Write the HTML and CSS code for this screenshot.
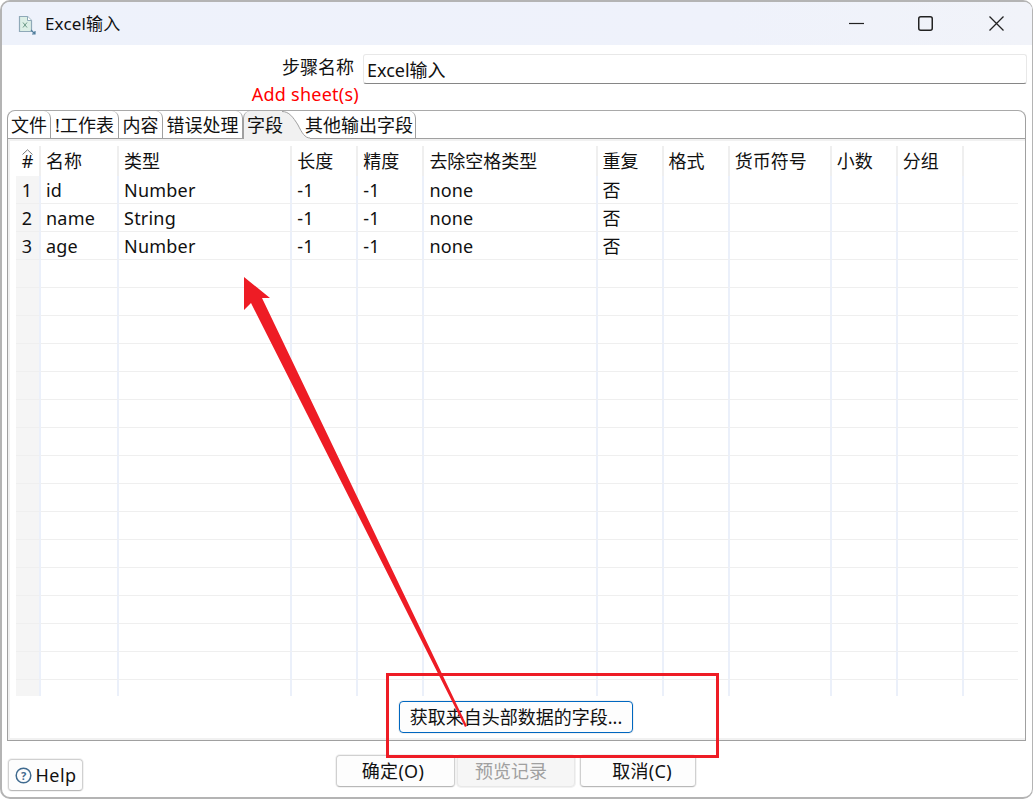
FILE: index.html
```html
<!DOCTYPE html>
<html lang="zh-CN">
<head>
<meta charset="utf-8">
<title>Excel输入</title>
<link rel="stylesheet" href="styles.css">
</head>
<body>
<div class="window">
  <header class="titlebar">
    <svg class="app-icon" width="20" height="20" viewBox="0 0 20 20">
      <path d="M1.5 1.5H9.5L13.5 5.5V16.5H1.5Z" fill="#dcefe6" stroke="#8fa9b8" stroke-width="1.2"/>
      <path d="M9.5 1.5V5.5H13.5" fill="#fff" stroke="#8fa9b8"/>
      <path d="M5 7.5L9 12.5M9 7.5L5 12.5" stroke="#6d9a87" stroke-width="1" fill="none"/>
      <path d="M13 15L17 19M17 16V19H14" stroke="#4f7d9c" stroke-width="1.2" fill="none"/>
    </svg>
    <span class="title">Excel输入</span>
    <div class="controls">
      <svg class="ctl" width="15" height="15" viewBox="0 0 15 15"><path d="M0 7.5H15" stroke="#222" stroke-width="1.2"/></svg>
      <svg class="ctl" width="15" height="15" viewBox="0 0 15 15"><rect x="0.75" y="0.75" width="13.5" height="13.5" rx="2" fill="none" stroke="#222" stroke-width="1.5"/></svg>
      <svg class="ctl" width="15" height="15" viewBox="0 0 15 15"><path d="M0.5 0.5L14.5 14.5M14.5 0.5L0.5 14.5" stroke="#222" stroke-width="1.3"/></svg>
    </div>
  </header>

  <div class="name-row">
    <label class="name-label">步骤名称</label>
    <div class="name-input">Excel输入</div>
  </div>
  <div class="warn">Add sheet(s)</div>

  <section class="folder">
    <nav class="tabs">
      <div class="tab t1">文件</div>
      <div class="tab t2">!工作表</div>
      <div class="tab t3">内容</div>
      <div class="tab t4">错误处理</div>
      <div class="tab active">字段
        <svg class="tail" width="30" height="28" viewBox="0 0 30 28"><path d="M0 0.5H2C9 0.5 13 6 18 14C22 22 25 27 30 27V28H0Z" fill="#f1f1f1"/><path d="M2 0.5C9 0.5 13 6 18 14C22 22 25 27 30 27" fill="none" stroke="#a0a0a0"/></svg>
      </div>
      <div class="tab t6">其他输出字段</div>
    </nav>
    <div class="panel">
      <div class="grid-wrap">
        <table class="grid">
          <colgroup>
            <col class="c0"><col class="c1"><col class="c2"><col class="c3"><col class="c3"><col class="c2"><col class="c3"><col class="c3"><col class="c4"><col class="c3"><col class="c3"><col class="c5">
          </colgroup>
          <thead>
            <tr>
              <th class="hash"><svg class="sort" width="11" height="6" viewBox="0 0 11 6"><path d="M0.5 5.5L5.5 0.8L10.5 5.5" fill="none" stroke="#777"/></svg><span class="hash-mark">#</span></th><th>名称</th><th>类型</th><th>长度</th><th>精度</th><th>去除空格类型</th><th>重复</th><th>格式</th><th>货币符号</th><th>小数</th><th>分组</th><th class="blank"></th>
            </tr>
          </thead>
          <tbody>
            <tr><td class="num">1</td><td>id</td><td>Number</td><td>-1</td><td>-1</td><td>none</td><td>否</td><td></td><td></td><td></td><td></td><td></td></tr>
            <tr><td class="num">2</td><td>name</td><td>String</td><td>-1</td><td>-1</td><td>none</td><td>否</td><td></td><td></td><td></td><td></td><td></td></tr>
            <tr><td class="num">3</td><td>age</td><td>Number</td><td>-1</td><td>-1</td><td>none</td><td>否</td><td></td><td></td><td></td><td></td><td></td></tr>
            <tr><td class="num"></td><td></td><td></td><td></td><td></td><td></td><td></td><td></td><td></td><td></td><td></td><td></td></tr>
            <tr><td class="num"></td><td></td><td></td><td></td><td></td><td></td><td></td><td></td><td></td><td></td><td></td><td></td></tr>
            <tr><td class="num"></td><td></td><td></td><td></td><td></td><td></td><td></td><td></td><td></td><td></td><td></td><td></td></tr>
            <tr><td class="num"></td><td></td><td></td><td></td><td></td><td></td><td></td><td></td><td></td><td></td><td></td><td></td></tr>
            <tr><td class="num"></td><td></td><td></td><td></td><td></td><td></td><td></td><td></td><td></td><td></td><td></td><td></td></tr>
            <tr><td class="num"></td><td></td><td></td><td></td><td></td><td></td><td></td><td></td><td></td><td></td><td></td><td></td></tr>
            <tr><td class="num"></td><td></td><td></td><td></td><td></td><td></td><td></td><td></td><td></td><td></td><td></td><td></td></tr>
            <tr><td class="num"></td><td></td><td></td><td></td><td></td><td></td><td></td><td></td><td></td><td></td><td></td><td></td></tr>
            <tr><td class="num"></td><td></td><td></td><td></td><td></td><td></td><td></td><td></td><td></td><td></td><td></td><td></td></tr>
            <tr><td class="num"></td><td></td><td></td><td></td><td></td><td></td><td></td><td></td><td></td><td></td><td></td><td></td></tr>
            <tr><td class="num"></td><td></td><td></td><td></td><td></td><td></td><td></td><td></td><td></td><td></td><td></td><td></td></tr>
            <tr><td class="num"></td><td></td><td></td><td></td><td></td><td></td><td></td><td></td><td></td><td></td><td></td><td></td></tr>
            <tr><td class="num"></td><td></td><td></td><td></td><td></td><td></td><td></td><td></td><td></td><td></td><td></td><td></td></tr>
            <tr><td class="num"></td><td></td><td></td><td></td><td></td><td></td><td></td><td></td><td></td><td></td><td></td><td></td></tr>
            <tr><td class="num"></td><td></td><td></td><td></td><td></td><td></td><td></td><td></td><td></td><td></td><td></td><td></td></tr>
            <tr><td class="num"></td><td></td><td></td><td></td><td></td><td></td><td></td><td></td><td></td><td></td><td></td><td></td></tr>
          </tbody>
        </table>
      </div>
      <div class="get-row"><button class="btn primary">获取来自头部数据的字段...</button></div>
    </div>
  </section>

  <footer class="footer">
    <button class="btn help">
      <svg width="17" height="17" viewBox="0 0 17 17"><circle cx="8.5" cy="8.5" r="7.3" fill="none" stroke="#3f6a8f" stroke-width="1.5"/><text x="8.5" y="12.5" class="help-q">?</text></svg>
      <span class="help-text">Help</span>
    </button>
    <div class="actions">
      <button class="btn ok">确定(O)</button>
      <button class="btn preview" disabled>预览记录</button>
      <button class="btn cancel">取消(C)</button>
    </div>
  </footer>

  <svg class="annot" width="1033" height="799" viewBox="0 0 1033 799">
    <polygon points="244,277 270,298 262,298 467,726 465,727 251,303 244,310" fill="#ee1c25"/>
    <rect x="387.5" y="674.5" width="330" height="82" fill="none" stroke="#ee1c25" stroke-width="3"/>
  </svg>
</div>
</body>
</html>
```

FILE: styles.css
```css
* { box-sizing: border-box; }
html, body { margin: 0; padding: 0; background: #fff; }
body {
  width: 1033px;
  height: 799px;
  overflow: hidden;
  font-family: "Noto Sans", "Noto Sans CJK SC", sans-serif;
  font-size: 18px;
  color: #111;
}
.window {
  position: relative;
  width: 1033px;
  height: 799px;
  display: flex;
  flex-direction: column;
  background: #fff;
  border: 2px solid #b4b4b4;
  border-top-width: 2px;
  border-right-width: 1px;
  border-radius: 10px;
}
.titlebar {
  height: 43px;
  flex: none;
  display: flex;
  align-items: center;
  background: linear-gradient(90deg, #eef2fb 0%, #eff2fb 70%, #f1f3f9 100%);
  border-radius: 8px 8px 0 0;
  padding-left: 16px;
}
.app-icon { flex: none; margin-top: 2px; }
.title { margin-left: 7px; font-size: 17px; letter-spacing: 0.15px; line-height: 24px; }
.controls {
  margin-left: auto;
  display: flex;
  align-items: center;
  gap: 54px;
  padding-right: 28px;
  margin-top: -1px;
}
.ctl:last-child { margin-left: 2px; }
.name-row {
  margin-top: 9px;
  height: 30px;
  flex: none;
  display: flex;
  align-items: center;
}
.name-label {
  width: 352px;
  text-align: right;
  line-height: 26px;
  margin-top: -4px;
}
.name-input {
  margin-left: 9px;
  width: 664px;
  height: 30px;
  line-height: 30px;
  padding-left: 3px;
  border: 1px solid #e8e8e8;
  border-bottom: 1px solid #868686;
  border-radius: 3px;
}
.warn {
  flex: none;
  height: 26px;
  width: 357px;
  line-height: 21px;
  text-align: right;
  color: #ff0000;
  letter-spacing: 0.25px;
}
.folder {
  flex: none;
  margin-left: 5px;
  width: 1019px;
  height: 631px;
  display: flex;
  flex-direction: column;
  border: 1px solid #a0a0a0;
  border-radius: 8px 8px 0 0;
  border-top-color: #a9a9a9;
}
.tabs {
  flex: none;
  height: 28px;
  display: flex;
  border-bottom: 1px solid #a0a0a0;
  margin-bottom: 0;
}
.tab {
  position: relative;
  height: 27px;
  line-height: 29px;
  text-align: center;
  white-space: nowrap;
  border-right: 1px solid #a0a0a0;
  border-radius: 0 7px 0 0;
}
.t1 { width: 43px; }
.t2 { width: 68px; }
.t3 { width: 44px; }
.t4 { width: 80px; }
.t6 { width: 116px; padding-left: 3px; margin-left: 20px; }
.tab.active {
  width: 37px;
  height: 28px;
  border-right: 0;
  background: #f1f1f1;
  border-radius: 7px 0 0 0;
  text-align: left;
  padding-left: 3px;
  z-index: 1;
  border-left: 1px solid #a0a0a0;
}
.tail { position: absolute; left: 36px; top: 0; z-index: -1; }
.panel {
  flex: 1;
  display: flex;
  flex-direction: column;
  border-top: 2px solid #f1f1f1;
  border-left: 2px solid #f1f1f1;
  border-bottom: 2px solid #f1f1f1;
  padding: 5px 0 0 6px;
}
.grid-wrap {
  width: 1002px;
  height: 550px;
  flex: none;
  overflow: hidden;
}
.grid {
  table-layout: fixed;
  width: 1002px;
  border-collapse: separate;
  border-spacing: 0;
}
.c0 { width: 25px; }
.c1 { width: 78px; }
.c2 { width: 173px; }
.c3 { width: 66px; }
.c4 { width: 102px; }
.c5 { width: 54px; }
th, td {
  padding: 0 0 0 5px;
  font-weight: 400;
  text-align: left;
  white-space: nowrap;
  overflow: hidden;
}
th {
  height: 30px;
  line-height: 30px;
  border-right: 2px solid #efefef;
}
th.blank { border-right: 0; }
td {
  height: 28px;
  padding-top: 2px;
  line-height: 25px;
  letter-spacing: 0.2px;
  border-bottom: 1px solid #efefef;
  border-right: 2px solid #ebf0fa;
}
td:last-child { border-right: 0; }
th.hash { position: relative; padding: 0; text-align: center; }
.hash-mark { display: block; line-height: 30px; }
.sort {
  position: absolute;
  left: 6px;
  top: 3px;
}
td.num {
  padding: 2px 1px 0 0;
  text-align: center;
  background: #f5f5f5;
  border-bottom-color: #efefef;
}
.get-row {
  flex: 1;
  display: flex;
  padding: 5px 0 0 383px;
}
.btn {
  font: inherit;
  color: inherit;
  height: 32px;
  padding: 0;
  background: #fdfdfd;
  border: 1px solid #d0d0d0;
  border-bottom-color: #b8b8b8;
  border-radius: 4px;
  box-shadow: 0 0 0 1px #f2f2f2;
  line-height: 28px;
}
.primary {
  width: 234px;
  border: 1px solid #0067c0;
}
.footer {
  flex: 1;
  display: flex;
  align-items: flex-start;
  padding: 14px 0 0 6px;
}
.help {
  width: 75px;
  margin-top: 4px;
  display: flex;
  align-items: center;
  justify-content: center;
  gap: 4px;
  flex: none;
}
.help-text { letter-spacing: 0.4px; }
.help-q {
  font-size: 11px;
  font-weight: 700;
  text-anchor: middle;
  fill: #3f6a8f;
}
.actions {
  margin-left: 253px;
  display: flex;
}
.ok { width: 119px; padding-right: 5px; letter-spacing: 0.3px; }
.preview {
  width: 118px;
  margin-left: 2px;
  padding-right: 10px;
  color: #a0a0a0;
  background: #f6f6f6;
  border-color: #e8e8e8;
}
.cancel { width: 116px; margin-left: 5px; padding-left: 8px; letter-spacing: 0.3px; }
.annot {
  position: absolute;
  left: -2px;
  top: -2px;
  pointer-events: none;
}
```
